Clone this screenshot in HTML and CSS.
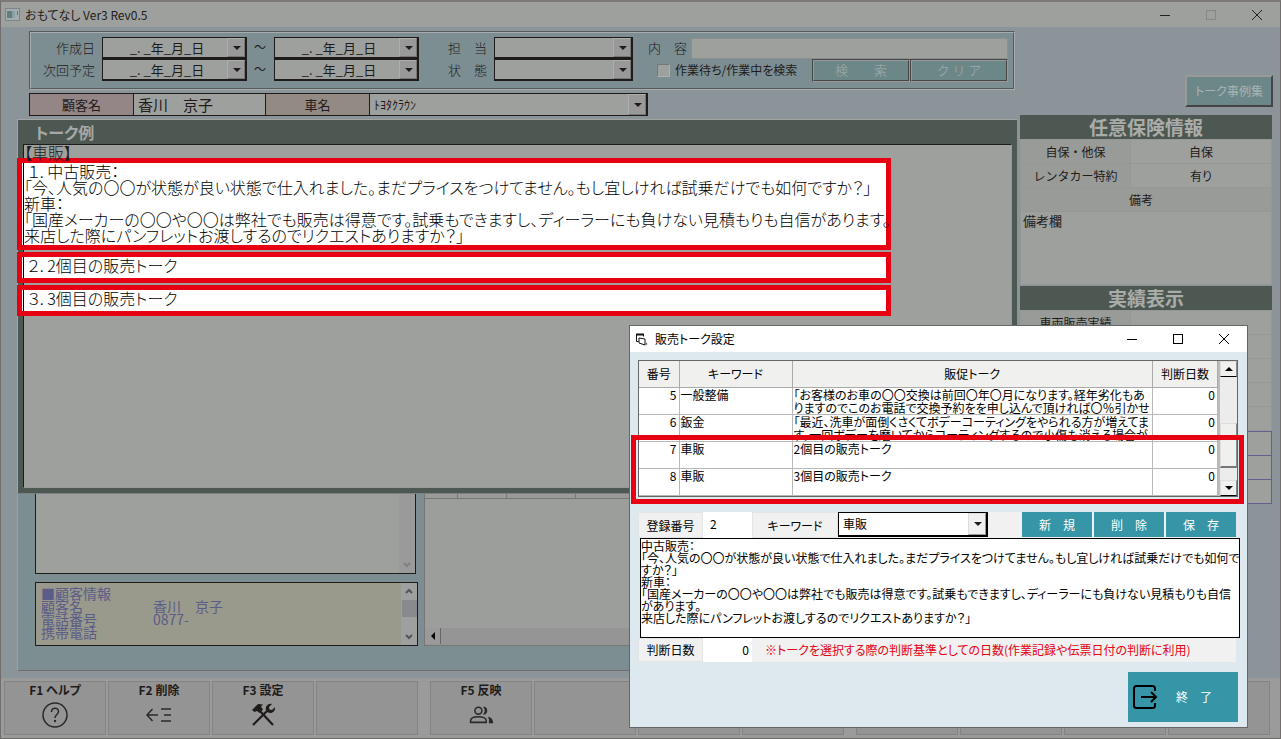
FILE: index.html
```html
<!DOCTYPE html>
<html lang="ja">
<head>
<meta charset="utf-8">
<title>おもてなし Ver3 Rev0.5</title>
<link rel="stylesheet" href="styles.css">
</head>
<body>
<div class="window">
  <header class="titlebar">
    <svg class="app-icon" viewBox="0 0 15 13"><rect x=".5" y=".5" width="14" height="12" fill="#a3adb0" stroke="#7d8588"/><rect x="2" y="3" width="5" height="7" fill="#5f7f7b"/><rect x="7" y="3" width="3" height="7" fill="#8ba0a6"/><rect x="12" y="3" width="1" height="4" fill="#6c7477"/></svg>
    <h1 class="app-title">おもてなし Ver3 Rev0.5</h1>
    <div class="caption-buttons">
      <button type="button" aria-label="最小化"><svg viewBox="0 0 10 10"><path d="M0 5.5h10" stroke="#222"/></svg></button>
      <button type="button" aria-label="最大化" disabled><svg viewBox="0 0 10 10"><rect x=".5" y=".5" width="9" height="9" fill="none" stroke="#858785"/></svg></button>
      <button type="button" aria-label="閉じる"><svg viewBox="0 0 10 10"><path d="M0 0l10 10M10 0L0 10" stroke="#222"/></svg></button>
    </div>
  </header>

  <main class="workspace">
    <div class="left">
      <form class="search">
        <label class="s-label" for="created-from">作成日</label>
        <span class="combo date"><select id="created-from"><option>_. _年_月_日</option></select></span>
        <span class="tilde">～</span>
        <span class="combo date"><select aria-label="作成日の終わり"><option>_. _年_月_日</option></select></span>
        <label class="s-label" for="staff">担　当</label>
        <span class="combo"><select id="staff"><option></option></select></span>
        <div class="s-last"><label for="content">内　容</label><input class="s-text" id="content" type="text"></div>

        <label class="s-label" for="next-from">次回予定</label>
        <span class="combo date"><select id="next-from"><option>_. _年_月_日</option></select></span>
        <span class="tilde">～</span>
        <span class="combo date"><select aria-label="次回予定の終わり"><option>_. _年_月_日</option></select></span>
        <label class="s-label" for="state">状　態</label>
        <span class="combo"><select id="state"><option></option></select></span>
        <div class="s-last"><input class="check" id="waiting" type="checkbox"><label class="check-label" for="waiting">作業待ち/作業中を検索</label><button class="teal" type="button">検　　索</button><button class="teal" type="button">ク リ ア</button></div>
      </form>

      <div class="customer">
        <label class="c-head pink" for="customer-name">顧客名</label>
        <input class="c-name" id="customer-name" type="text" value="香川&#12288;京子">
        <label class="c-head sand" for="car-name">車名</label>
        <span class="combo car"><select id="car-name"><option>ﾄﾖﾀｸﾗｳﾝ</option></select></span>
      </div>

      <section class="talk">
        <h2 class="talk-title">トーク例</h2>
        <div class="talk-body">
          <p class="talk-key">【車販】</p>
          <div class="mark"><p>&nbsp;１. 中古販売：<br>「今、人気の〇〇が状態が良い状態で仕入れました。まだプライスをつけてません。もし宜しければ試乗だけでも如何ですか？」<br>新車：<br>「国産メーカーの〇〇や〇〇は弊社でも販売は得意です。試乗もできますし、ディーラーにも負けない見積もりも自信があります。<br>来店した際にパンフレットお渡しするのでリクエストありますか？」</p></div>
          <div class="mark"><p>&nbsp;２. 2個目の販売トーク</p></div>
          <div class="mark"><p>&nbsp;３. 3個目の販売トーク</p></div>
        </div>
      </section>

      <section class="lower">
        <div class="lists">
          <div class="history"><div class="bar"><span></span><svg viewBox="0 0 8 6"><path d="M1 1l3 3 3-3" fill="none" stroke="#7f807f" stroke-width="2"/></svg></div></div>
          <div class="info">
            <dl>
              <dt>■顧客情報</dt><dd></dd>
              <dt>顧客名</dt><dd>香川　京子</dd>
              <dt>電話番号</dt><dd>0877-</dd>
              <dt>携帯電話</dt><dd></dd>
            </dl>
            <div class="bar live"><svg viewBox="0 0 8 6"><path d="M1 5l3-3 3 3" fill="none" stroke="#555" stroke-width="2"/></svg><span class="thumb"></span><svg viewBox="0 0 8 6"><path d="M1 1l3 3 3-3" fill="none" stroke="#555" stroke-width="2"/></svg></div>
          </div>
        </div>
        <div class="sheet">
          <div class="sheet-head"><i></i><i></i><i></i><i></i></div>
          <div class="sheet-scroll"><button type="button" aria-label="左へ"><svg viewBox="0 0 4 8"><path d="M4 0v8L0 4z"/></svg></button></div>
        </div>
      </section>
    </div>

    <aside class="right">
      <button class="case-button" type="button">トーク事例集</button>
      <h2 class="side-title">任意保険情報</h2>
      <table class="side-table">
        <tr><th>自保・他保</th><td>自保</td></tr>
        <tr><th>レンタカー特約</th><td>有り</td></tr>
        <tr><th class="wide" colspan="2">備考</th></tr>
        <tr><td class="memo" colspan="2">備考欄</td></tr>
      </table>
      <h2 class="side-title">実績表示</h2>
      <table class="side-table">
        <tr><th>車両販売実績</th><td></td></tr>
        <tr><th></th><td></td></tr>
        <tr><th></th><td></td></tr>
        <tr><th></th><td></td></tr>
        <tr><th></th><td></td></tr>
      </table>
      <table class="side-table violet">
        <tr><th></th><td></td></tr>
        <tr><th></th><td></td></tr>
        <tr><th></th><td></td></tr>
      </table>
    </aside>
  </main>

  <nav class="keys">
    <div class="key-group">
      <button type="button">F1 ヘルプ<svg viewBox="0 0 26 26"><circle cx="13" cy="13" r="12" fill="none" stroke="#2b2828" stroke-width="1.5"/><path d="M9.500 10c0-5 7-5 7-.5 0 3-3.500 3-3.500 6.500" fill="none" stroke="#2b2828" stroke-width="1.500"/><circle cx="13" cy="19" r="1.200" fill="#2b2828"/></svg></button>
      <button type="button">F2 削除<svg viewBox="0 0 26 26"><path d="M1 13h11M6.500 7L1 13l5.500 6M15 7h10M18 13h7M15 19h10" fill="none" stroke="#2b2828" stroke-width="1.500"/></svg></button>
      <button type="button">F3 設定<svg viewBox="0 0 26 26"><path d="M2 8l6-6 5 .5-2 2 2 3-3.500 3.500-2.500-2-2.500 1z" fill="#1f1b1b"/><path d="M10 9l13 14M3 23L18 8" stroke="#1f1b1b" stroke-width="2.200"/><path d="M22 2l-3 3 .5 2.500 2.500.5 3-3c.6 5-3.500 7-7 5.500l-2-2.500C15 4.500 18 1 22 2z" fill="#1f1b1b"/></svg></button>
      <button type="button" aria-label="F4"></button>
    </div>
    <div class="key-group">
      <button type="button">F5 反映<svg viewBox="0 0 30 26"><g fill="none" stroke="#2b2828" stroke-width="1.800"><circle cx="12" cy="8" r="4"/><path d="M3 21.500v-2c0-6 18-6 18 0v2z"/></g><path d="M17 3.500c7-1.500 7 10 0 9 3-2 3-7 0-9zM23 15c4 1 6 3 6 7.500h-5c.5-3 .5-5.500-1-7.500z" fill="#2b2828"/></svg></button>
      <button type="button" aria-label="F6"></button>
      <button type="button" aria-label="F7"></button>
      <button type="button" aria-label="F8"></button>
    </div>
    <div class="key-group">
      <button type="button" aria-label="F9"></button>
      <button type="button" aria-label="F10"></button>
      <button type="button" aria-label="F11"></button>
      <button type="button" aria-label="F12"></button>
    </div>
  </nav>
</div>

<div class="dialog" role="dialog" aria-labelledby="dialog-title">
  <header class="dialog-bar">
    <svg class="dialog-icon" viewBox="0 0 13 13"><path d="M1.500 8.500v-7h7v2M1.500 8.500h2" fill="none" stroke="#111"/><path d="M1 1.500h8" stroke="#111" stroke-width="2"/><path d="M4 5l6 1v6L4 10z" fill="#fff" stroke="#111"/><path d="M11 9l1.500 2-2 1.500" fill="#666"/></svg>
    <h2 class="dialog-title" id="dialog-title">販売トーク設定</h2>
    <div class="caption-buttons">
      <button type="button" aria-label="最小化"><svg viewBox="0 0 10 10"><path d="M0 5.500h10" stroke="#000"/></svg></button>
      <button type="button" aria-label="最大化"><svg viewBox="0 0 10 10"><rect x=".5" y=".5" width="9" height="9" fill="none" stroke="#000"/></svg></button>
      <button type="button" aria-label="閉じる"><svg viewBox="0 0 10 10"><path d="M0 0l10 10M10 0L0 10" stroke="#000"/></svg></button>
    </div>
  </header>
  <div class="dialog-body">
    <div class="grid">
      <table class="talk-table">
        <colgroup><col class="w-no"><col class="w-key"><col><col class="w-days"></colgroup>
        <thead><tr><th>番号</th><th>キーワード</th><th>販促トーク</th><th>判断日数</th></tr></thead>
        <tbody>
          <tr><td class="num">5</td><td>一般整備</td><td><div>「お客様のお車の〇〇交換は前回〇年〇月になります。経年劣化もあ<br>りますのでこのお電話で交換予約をを申し込んで頂ければ〇％引かせ</div></td><td class="num">0</td></tr>
          <tr><td class="num">6</td><td>鈑金</td><td><div>「最近、洗車が面倒くさくてボデーコーティングをやられる方が増えてま<br>す。一回ボデーを磨いてからコーティングするので小傷も消える場合が</div></td><td class="num">0</td></tr>
          <tr><td class="num">7</td><td>車販</td><td><div>2個目の販売トーク</div></td><td class="num">0</td></tr>
          <tr><td class="num">8</td><td>車販</td><td><div>3個目の販売トーク</div></td><td class="num">0</td></tr>
        </tbody>
      </table>
      <div class="vscroll">
        <button type="button" aria-label="上へ"><svg viewBox="0 0 8 4"><path d="M0 4h8L4 0z"/></svg></button>
        <span class="vthumb"></span>
        <button type="button" aria-label="下へ"><svg viewBox="0 0 8 4"><path d="M0 0h8L4 4z"/></svg></button>
      </div>
      <div class="frame"></div>
    </div>
    <form class="entry">
      <div class="entry-row">
        <label class="e-label no" for="reg-no">登録番号</label>
        <input class="e-input" id="reg-no" type="text" value="2">
        <label class="e-label key" for="keyword">キーワード</label>
        <span class="combo keyword"><select id="keyword"><option>車販</option></select></span>
        <div class="actions"><button type="button">新　規</button><button type="button">削　除</button><button type="button">保　存</button></div>
      </div>
      <textarea class="e-talk" aria-label="販促トーク">中古販売：
「今、人気の〇〇が状態が良い状態で仕入れました。まだプライスをつけてません。もし宜しければ試乗だけでも如何で
すか？」
新車：
「国産メーカーの〇〇や〇〇は弊社でも販売は得意です。試乗もできますし、ディーラーにも負けない見積もりも自信
があります。
来店した際にパンフレットお渡しするのでリクエストありますか？」</textarea>
      <div class="entry-row days">
        <label class="e-label no" for="days">判断日数</label>
        <input class="e-input right-text" id="days" type="text" value="0">
        <p class="note">※トークを選択する際の判断基準としての日数(作業記録や伝票日付の判断に利用)</p>
      </div>
    </form>
    <button class="exit" type="button"><svg viewBox="0 0 26 26"><path d="M23 7V4.500Q23 2 20.500 2h-16Q2 2 2 4.500v17Q2 24 4.500 24h16q2.500 0 2.500-2.500V19" fill="none" stroke="#000" stroke-width="2"/><path d="M9 13h14M19 8l5 5-5 5" fill="none" stroke="#000" stroke-width="2"/></svg><span>終　了</span></button>
  </div>
</div>
</body>
</html>
```
FILE: styles.css
```css
* { box-sizing: border-box; }
body {
  margin: 0;
  font: 12px/16px "Noto Sans CJK JP", sans-serif;
  font-feature-settings: "palt";
  color: #1f1b1b;
}
h1, h2, p, dl, dd { margin: 0; }
button, input, select, textarea { font: inherit; font-feature-settings: inherit; color: inherit; border-radius: 0; }
button { padding: 0; }

.window {
  min-height: 100vh;
  display: flex;
  flex-direction: column;
  background: #8a9499;
  border: 1px solid #716d6d;
  border-top: 2px solid #7c7979;
}
.titlebar { display: flex; align-items: center; gap: 5px; height: 25px; padding-left: 4px; background: #9ea09e; }
.app-icon { width: 15px; height: 13px; }
.app-title { flex: 1; font-size: 12px; font-weight: 400; }
.caption-buttons { display: flex; }
.caption-buttons button { width: 46px; height: 25px; border: 0; background: none; display: grid; place-items: center; }
.caption-buttons svg { width: 10px; height: 10px; }

.workspace {
  flex: 1;
  display: grid;
  grid-template-columns: minmax(0, 1fr) 252px;
  gap: 3px;
  padding: 4px 8px 7px 16px;
}
.left { display: flex; flex-direction: column; }

.search {
  display: grid;
  grid-template-columns: 64px 145px 13px 145px 61px 139px 1fr;
  grid-auto-rows: 22px;
  column-gap: 7px;
  height: 59px;
  margin: 0 2px 0 12px;
  padding: 4px 5px 0 0;
  background: #7c8e92;
  border: 2px groove #a7adaf;
}
.s-label { text-align: right; font-size: 13px; font-weight: 300; line-height: 22px; color: #1f1b1b; font-feature-settings: normal; }
.tilde { line-height: 20px; }
.combo { display: flex; height: 22px; background: #9ea09e; border: 1px solid #1f1b1b; border-right-width: 2px; border-bottom-width: 2px; position: relative; }
.combo select { flex: 1; min-width: 0; appearance: none; border: 0; padding: 0 18px 0 4px; background: none; }
.combo::before { content: ""; position: absolute; right: 0; top: 0; bottom: 0; width: 16px; border: 1px solid #adafad; border-right-color: #777; border-bottom-color: #777; background: #989998; }
.combo::after { content: ""; position: absolute; right: 4px; top: 50%; margin-top: -2px; border: 4px solid transparent; border-top-color: #1f1b1b; border-bottom: 0; }
.date select { font-size: 13px; text-align-last: center; }
.s-last { display: flex; align-items: center; padding-left: 8px; font-size: 13px; font-weight: 300; font-feature-settings: normal; }
.s-text { flex: 1; min-width: 0; height: 21px; margin-left: 4px; background: #9ea09e; border: 1px solid #8b8f8f; }
.check { appearance: none; width: 13px; height: 13px; margin: 0 5px 0 9px; background: #9ea09e; border: 1px solid #aeb0ae; border-top-color: #777; border-left-color: #777; }
.check-label { flex: 1; font-size: 12px; font-weight: 400; font-feature-settings: "palt"; }
.teal { width: 98px; height: 23px; color: #a4aeae; background: #6c8787; border: 2px groove #999; }

.customer { display: flex; width: 619px; height: 23px; margin: 3px 0 3px 12px; border: 1px solid #1f1b1b; border-right: 0; background: #9ea09e; }
.c-head { text-align: center; font-size: 13px; line-height: 21px; font-feature-settings: normal; border-right: 1px solid #1f1b1b; width: 104px; }
.pink { background: #948586; }
.sand { background: #948a84; }
.c-name { width: 132px; padding: 0 4px; border: 0; border-right: 1px solid #1f1b1b; background: none; font-size: 15px; }
.car { flex: 1; border-width: 0 2px 1px 0; height: 22px; }

.talk { display: flex; flex-direction: column; height: 375px; padding: 0 5px 5px 5px; background: #4e5852; border: 1px solid #a3a5a3; border-right: 0; border-bottom-color: #7b8081; }
.talk-title { padding-left: 12px; font-size: 16px; line-height: 24px; color: #a5a8a5; }
.talk-body { flex: 1; background: #9ea09e; border: 1px solid #1f1b1b; border-right-color: #999; border-bottom-color: #999; font-size: 16px; font-weight: 300; line-height: 16px; white-space: nowrap; }
.talk-key { height: 13px; line-height: 14px; }
.mark { width: 874px; margin: 0 0 2px -7px; padding-left: 1px; background: #fff; border: 5px solid #e60012; color: #000; }
.mark p { min-height: 21px; padding: 0 0 2px; border-left: 1px solid #000; }

.lower { flex: 1; display: flex; gap: 6px; width: 100%; padding: 0 17px 24px; background: #7c8e92; border: 1px solid #716d6d; border-top: 0; border-left-color: #9ba2a4; }
.lists { width: 383px; display: flex; flex-direction: column; gap: 8px; }
.history { flex: 1; width: 381px; display: flex; justify-content: flex-end; background: #9ea09e; border: 1px solid #1f1b1b; border-top: 0; }
.bar { width: 16px; display: flex; flex-direction: column; align-items: center; justify-content: space-between; padding: 5px 0; background: #999a99; }
.bar svg { width: 8px; height: 6px; }
.live { background: #9ea0a0; }
.thumb { width: 15px; height: 17px; margin-bottom: 12px; background: #888a8d; }
.info { height: 64px; display: flex; justify-content: space-between; background: #99998c; border: 1px solid #1f1b1b; }
.info dl { display: grid; grid-template-columns: 112px 1fr; grid-auto-rows: 13px; padding: 4px 5px; font-size: 14px; line-height: 13px; color: #5c5c88; font-feature-settings: normal; }
.sheet { flex: 1; display: flex; flex-direction: column; justify-content: space-between; background: #9c9e9c; border: 1px solid #777; border-top: 0; }
.sheet-head { display: grid; grid-template-columns: 33px 49px 69px 1fr; height: 5px; border-bottom: 1px solid #777; background: #999a99; }
.sheet-head i { border-right: 1px solid #777; }
.sheet-scroll { height: 17px; background: #949594; }
.sheet-scroll button { width: 16px; height: 16px; display: grid; place-items: center; background: #999a99; border: 0; border-right: 1px solid #666; }
.sheet-scroll svg { width: 4px; height: 8px; }

.right { display: flex; flex-direction: column; padding-top: 44px; }
.case-button { align-self: flex-end; width: 88px; height: 32px; margin: 0 -1px 8px 0; color: #a9b3b3; background: #6c8787; border: 2px outset #999; }
.side-title { font-size: 19px; line-height: 24px; text-align: center; color: #a9aca9; background: #4e5852; font-feature-settings: normal; }
.side-table { width: 100%; border-collapse: collapse; table-layout: fixed; background: #9ea09e; }
.side-table + .side-title { margin-top: 1px; }
.side-table th, .side-table td { height: 24px; padding: 0; line-height: 18px; border: 1px solid #969896; text-align: center; font-weight: 400; }
.side-table th { width: 110px; font-size: 12px; background: #999b99; font-feature-settings: normal; }
.side-table .wide { padding-right: 10px; }
.side-table .memo { height: 73px; padding: 0 2px; text-align: left; vertical-align: top; font-size: 13px; }
.side-table.violet th, .side-table.violet td { border-color: #62608c; background: #9ea09e; }

.keys { display: flex; gap: 12px; height: 60px; padding: 3px 10px 3px 3px; background: #9a9b9a; }
.key-group { flex: 1; display: flex; gap: 2px; }
.key-group button { flex: 1; display: flex; flex-direction: column; align-items: center; gap: 4px; font-weight: 700; line-height: 16px; background: #949494; border: 1px solid #838383; }
.key-group svg { width: 26px; height: 26px; }

.dialog { position: absolute; left: 629px; top: 325px; width: 619px; background: #dde9ee; border: 1px solid #666; color: #000; }
.dialog-bar { display: flex; align-items: center; gap: 7px; height: 26px; padding-left: 5px; background: #fff; }
.dialog-icon { width: 13px; height: 13px; }
.dialog-title { flex: 1; font-size: 12px; font-weight: 400; }
.dialog-body { display: flex; flex-direction: column; padding: 8px 9px 5px 8px; }
.grid { position: relative; display: flex; gap: 2px; height: 137px; background: #bbb; border: 1px solid #666; }
.talk-table { flex: 1; width: 578px; border-collapse: collapse; table-layout: fixed; background: #fff; }
.w-no { width: 40px; }
.w-key { width: 113px; }
.w-days { width: 65px; }
.talk-table th { height: 26px; padding: 0; font-weight: 400; background: #f0f0ee; border: 1px solid #aaa; border-width: 0 1px 1px 0; }
.talk-table td { height: 27px; padding: 0 1px; vertical-align: top; line-height: 13px; white-space: nowrap; border: 1px solid #b8b8b8; border-width: 0 1px 1px 0; }
.talk-table td div { height: 26px; overflow: hidden; }
.talk-table .num { text-align: right; padding-right: 2px; }
.vscroll { width: 17px; display: flex; flex-direction: column; justify-content: space-between; background: #ececec; }
.vscroll button { height: 16px; display: grid; place-items: center; background: #f0f0ee; border: 1px outset #ddd; border-bottom-color: #555; }
.vscroll svg { width: 8px; height: 4px; }
.vthumb { height: 45px; margin-top: 34px; background: #f0f0ee; border: 1px outset #ddd; border-bottom: 2px solid #777; }
.frame { position: absolute; left: -8px; top: 74px; width: 613px; height: 69px; border: 5px solid #e60012; }

.entry { margin-top: 15px; }
.entry-row { display: flex; height: 26px; margin-right: 2px; background: #f1f1f1; }
.e-label { text-align: center; line-height: 26px; border: 1px solid #e4e4e4; }
.no { width: 65px; }
.key { width: 86px; }
.e-input { width: 49px; padding: 0 7px 3px; border: 0; background: #fff; }
.right-text { padding: 0 3px; text-align: right; }
.combo.keyword { width: 150px; height: 25px; background: #fff; border-color: #000; }
.keyword::before { background: #f0f0f0; border-color: #ddd #999 #999 #ddd; }
.actions { flex: 1; display: flex; justify-content: flex-end; gap: 2px; }
.actions button { width: 70px; height: 25px; border: 0; color: #fff; background: #3695a6; }
.e-talk { display: block; width: 600px; height: 100px; margin-left: 2px; padding: 1px 0 0; resize: none; overflow: hidden; border: 1px solid #000; background: #fff; line-height: 12px; white-space: pre; }
.days { height: 24px; }
.days .e-label { line-height: 22px; }
.note { padding-left: 13px; line-height: 24px; color: #e60012; }
.exit { align-self: flex-end; display: flex; align-items: center; gap: 18px; width: 110px; height: 50px; margin-top: 10px; padding-left: 4px; border: 0; color: #fff; background: #3695a6; }
.exit svg { width: 26px; height: 26px; }
```
